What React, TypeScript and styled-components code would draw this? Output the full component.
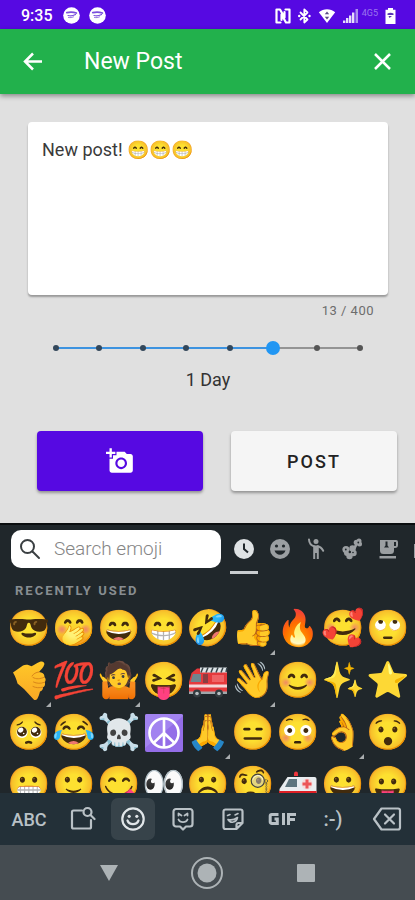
import React, { useState } from 'react';
import styled, { createGlobalStyle, css } from 'styled-components';

const GlobalStyle = createGlobalStyle`
  *, *::before, *::after { box-sizing: border-box; }
  body { margin: 0; background: #e0e0e0; font-family: Roboto, "Noto Sans", sans-serif; }
  button, input, textarea { font-family: inherit; }
  button { border: 0; padding: 0; background: none; cursor: pointer; }
`;

const Screen = styled.div`
  display: flex;
  flex-direction: column;
  height: 100vh;
  overflow: hidden;
  background: #e0e0e0;
`;

const StatusBar = styled.div`
  flex: none;
  display: flex;
  align-items: center;
  justify-content: space-between;
  height: 29px;
  padding: 2px 19px 0 21px;
  background: #5609e2;
  color: #fff;
`;

const StatusGroup = styled.div<{ $gap: number }>`
  display: flex;
  align-items: center;
  gap: ${(p) => p.$gap}px;
`;

const Clock = styled.span`
  margin-right: 1px;
  font-size: 16px;
  font-weight: 500;
  line-height: 20px;
`;

const NetworkType = styled.span`
  font-size: 9px;
  line-height: 10px;
  color: #9a76ee;
  align-self: flex-start;
  margin-left: -4px;
`;

const AppBar = styled.header`
  flex: none;
  display: flex;
  align-items: center;
  height: 65px;
  padding: 0 20px;
  background: #22b14c;
  color: #fff;
  box-shadow: 0 2px 5px rgba(0, 0, 0, 0.4);
`;

const BarButton = styled.button`
  display: flex;
  width: 25px;
  height: 25px;
  color: inherit;
`;

const BarTitle = styled.h1`
  flex: 1;
  margin: 0 0 0 39px;
  font-size: 23px;
  font-weight: 400;
  line-height: 28px;
`;

const Compose = styled.main`
  flex: none;
  padding: 28px 18px 32px 28px;
`;

const Field = styled.div`
  margin-right: 9px;
`;

const PostInput = styled.textarea`
  display: block;
  width: 100%;
  height: 173px;
  padding: 14px;
  border: 0;
  border-radius: 4px;
  outline: none;
  resize: none;
  background: #fff;
  color: #3a3a3a;
  font-size: 18px;
  line-height: 27px;
  box-shadow: 0 2px 2px rgba(0, 0, 0, 0.32);
`;

const Counter = styled.div`
  margin: 7px 14px 0 0;
  text-align: right;
  font-size: 13px;
  line-height: 18px;
  letter-spacing: 0.5px;
  color: #6d6d6d;
`;

const SliderBox = styled.div`
  position: relative;
  height: 16px;
  margin: 20px 21px 0 21px;
`;

const Track = styled.div`
  position: absolute;
  inset: 7px 7px auto;
  height: 2px;
  background: #949494;
`;

const TrackFill = styled.div`
  height: 2px;
  background: #3d93e0;
`;

const Ticks = styled.div`
  position: absolute;
  inset: 5px 4px auto;
  display: flex;
  justify-content: space-between;
`;

const Tick = styled.span<{ $filled: boolean }>`
  width: 6px;
  height: 6px;
  border-radius: 50%;
  background: ${(p) => (p.$filled ? '#33475a' : '#555')};
`;

const Range = styled.input`
  position: absolute;
  inset: 0;
  width: 100%;
  height: 16px;
  margin: 0;
  appearance: none;
  background: transparent;
  &::-webkit-slider-thumb {
    appearance: none;
    width: 14px;
    height: 14px;
    border-radius: 50%;
    background: #2196f3;
  }
`;

const DurationLabel = styled.label`
  display: block;
  margin-top: 12px;
  text-align: center;
  font-size: 18px;
  line-height: 24px;
  color: #333;
`;

const Actions = styled.div`
  display: grid;
  grid-template-columns: 1fr 1fr;
  gap: 28px;
  margin: 39px 0 0 9px;
`;

const ActionButton = styled.button<{ $primary?: boolean }>`
  display: flex;
  align-items: center;
  justify-content: center;
  height: 60px;
  border-radius: 4px;
  background: ${(p) => (p.$primary ? '#5609e2' : '#f5f5f5')};
  color: ${(p) => (p.$primary ? '#fff' : '#222')};
  font-size: 18px;
  font-weight: 500;
  letter-spacing: 2px;
  box-shadow: 0 2px 3px rgba(0, 0, 0, 0.35);
`;

const Keyboard = styled.section`
  flex: 1;
  min-height: 0;
  display: flex;
  flex-direction: column;
  border-top: 2px solid #0b0e10;
  background: #20272b;
`;

const KeyboardTop = styled.div`
  flex: none;
  display: flex;
  align-items: flex-start;
  gap: 5px;
  padding: 5px 0 0 11px;
  overflow: hidden;
`;

const SearchBox = styled.label`
  flex: 0 0 52%;
  min-width: 0;
  display: flex;
  align-items: center;
  gap: 13px;
  height: 38px;
  padding: 0 8px;
  border-radius: 10px;
  background: #fff;
  color: #3a3f42;
`;

const SearchInput = styled.input`
  flex: 1;
  width: 100%;
  min-width: 0;
  border: 0;
  padding: 0;
  outline: none;
  background: none;
  font-size: 19px;
  font-weight: 300;
  line-height: 24px;
  color: #333;
  &::placeholder { color: #858585; opacity: 1; }
`;

const CategoryTabs = styled.div`
  flex: 1;
  min-width: 0;
  display: flex;
  overflow: hidden;
`;

const CategoryTab = styled.button<{ $active?: boolean }>`
  flex: 0 0 36px;
  display: flex;
  justify-content: center;
  height: 44px;
  padding-top: 8px;
  color: ${(p) => (p.$active ? '#dfe3e5' : '#9b9fa2')};
  ${(p) =>
    p.$active &&
    css`
      background: linear-gradient(#c9cdd0, #c9cdd0) center bottom / 28px 3px no-repeat;
    `}
`;

const SectionTitle = styled.h2`
  flex: none;
  margin: 8px 15px 3px;
  font-size: 13px;
  font-weight: 700;
  line-height: 18px;
  letter-spacing: 2px;
  color: #878d91;
`;

const EmojiGrid = styled.div`
  flex: 1;
  min-height: 0;
  overflow: hidden;
  display: grid;
  grid-template-columns: repeat(9, 1fr);
  grid-auto-rows: 52px;
  padding: 0 5px 0 7px;
`;

const EmojiKey = styled.button<{ $variants?: boolean }>`
  position: relative;
  display: flex;
  align-items: center;
  justify-content: center;
  min-width: 0;
  font-size: 35px;
  line-height: 52px;
  color: #fff;
  ${(p) =>
    p.$variants &&
    css`
      &::after {
        content: '';
        position: absolute;
        right: 1px;
        bottom: 0;
        border-style: solid;
        border-width: 0 0 5px 5px;
        border-color: transparent transparent #a9adaf;
      }
    `}
`;

const Glyph = styled.span<{ $mirror?: boolean }>`
  display: block;
  transform: ${(p) => (p.$mirror ? 'scaleX(-1)' : 'none')};
`;

const ModeBar = styled.nav`
  flex: none;
  display: grid;
  grid-template-columns: 58fr repeat(6, 50fr) 57fr;
  align-items: center;
  height: 52px;
  background: #233038;
  color: #b9c1c6;
`;

const ModeKey = styled.button<{ $active?: boolean; $size?: number }>`
  display: flex;
  align-items: center;
  justify-content: center;
  justify-self: center;
  width: 44px;
  height: 42px;
  border-radius: 7px;
  background: ${(p) => (p.$active ? '#37434a' : 'transparent')};
  color: ${(p) => (p.$active ? '#e1e6e9' : 'inherit')};
  font-size: ${(p) => p.$size ?? 18}px;
  font-weight: 500;
`;

const SystemNav = styled.nav`
  flex: none;
  display: grid;
  grid-template-columns: repeat(3, 1fr);
  justify-items: center;
  align-items: center;
  height: 55px;
  padding: 0 60px;
  background: #454c51;
  color: #adb3b6;
`;

const NavButton = styled.button`
  display: flex;
  color: inherit;
`;

const line = { fill: 'none', stroke: 'currentColor', strokeLinecap: 'round', strokeLinejoin: 'round' } as const;

const SpotifyIcon = () => (
  <svg width="17" height="17" viewBox="0 0 17 17">
    <circle cx="8.500" cy="8.500" r="8.300" fill="#fff" />
    <g fill="none" stroke="#7a4fdc" strokeLinecap="round">
      <path d="M3.800 5.600c3.200-.8 6.500-.7 9.600.4" strokeWidth="1.800" />
      <path d="M5 8.500c2.500.8 5 .4 7.500-1" strokeWidth="1.200" />
      <path d="M5.500 10.500c2 .3 3.500.1 5-.6" strokeWidth=".8" />
    </g>
  </svg>
);

const NfcIcon = () => (
  <svg width="16" height="16" viewBox="0 0 16 16">
    <path
      d="M5.500 14.500H1.500v-13H5l4.500 8V4M10.500 1.500h4v13H11L6.500 6.500V12"
      {...line}
      strokeWidth="2.200"
    />
  </svg>
);

const BluetoothIcon = () => (
  <svg width="13" height="16" viewBox="0 0 13 16">
    <path d="M2.500 4.500l7 7L6.300 14.500v-13l3.200 3-7 7" {...line} strokeWidth="1.800" />
    <circle cx="1.200" cy="8" r="1.200" fill="currentColor" />
    <circle cx="11.500" cy="8" r="1.200" fill="currentColor" />
  </svg>
);

const WifiIcon = () => (
  <svg width="18" height="16" viewBox="0 0 18 16">
    <path d="M.8 4.200C5.500.2 12.500.2 17.200 4.200L9 15z" fill="currentColor" />
    <path d="M9 3.500l2.200 2.800H6.800zM9 11.500l2.200-2.800H6.800z" fill="#5a4a86" />
  </svg>
);

const SignalIcon = () => (
  <svg width="16" height="16" viewBox="0 0 16 16" fill="#e6defb">
    <path d="M0 12.500h2.400V15H0zM3 10h2.400v5H3zM6 7.500h2.400V15H6zM9 4.500h2.400V15H9z" />
    <path d="M12.500 1h2.500v14h-2.500z" fill="#ab90ef" />
  </svg>
);

const BatteryIcon = () => (
  <svg width="11" height="16" viewBox="0 0 11 16">
    <path d="M3 0h5v1.700h2.500V16H.5V1.700H3z" fill="currentColor" />
    <path d="M2.500 5.500c2-1 4-1 6 0V7h-6zM3.500 8h3.500L4.500 10z" fill="#5a35b5" />
  </svg>
);

const BackIcon = () => (
  <svg width="25" height="25" viewBox="0 0 25 25">
    <path d="M22 12.500H5M13 4.500l-8 8 8 8" fill="none" stroke="currentColor" strokeWidth="2.500" />
  </svg>
);

const CloseIcon = () => (
  <svg width="25" height="25" viewBox="0 0 25 25">
    <path d="M5 5l15 15M20 5L5 20" fill="none" stroke="currentColor" strokeWidth="2.500" />
  </svg>
);

const AddPhotoIcon = () => (
  <svg width="28" height="28" viewBox="0 0 24 24" fill="currentColor">
    <path d="M3 4V1h2v3h3v2H5v3H3V6H0V4h3zm3 6V7h3V4h7l1.830 2H21c1.100 0 2 .9 2 2v12c0 1.100-.9 2-2 2H5c-1.100 0-2-.9-2-2V10h3zm7 9c2.760 0 5-2.240 5-5s-2.240-5-5-5-5 2.240-5 5 2.240 5 5 5zm-3.200-5c0 1.770 1.430 3.200 3.200 3.200s3.200-1.430 3.200-3.200-1.430-3.200-3.200-3.200-3.200 1.430-3.200 3.200z" />
  </svg>
);

const SearchIcon = () => (
  <svg width="22" height="22" viewBox="0 0 22 22">
    <circle cx="8.500" cy="8.500" r="6.500" {...line} strokeWidth="2" />
    <path d="M13.500 13.500l6.500 6.500" {...line} strokeWidth="2" />
  </svg>
);

const ClockIcon = () => (
  <svg width="22" height="22" viewBox="0 0 22 22">
    <circle cx="11" cy="11" r="10" fill="currentColor" />
    <path d="M11 5.500V11l4 3.500" fill="none" stroke="#20272b" strokeWidth="2" />
  </svg>
);

const SmileyIcon = () => (
  <svg width="22" height="22" viewBox="0 0 22 22">
    <circle cx="11" cy="11" r="10" fill="currentColor" />
    <circle cx="7.500" cy="8" r="1.600" fill="#20272b" />
    <circle cx="14.500" cy="8" r="1.600" fill="#20272b" />
    <path d="M5.500 12.500h11c-.7 2.600-2.900 4.200-5.500 4.200s-4.800-1.600-5.500-4.200z" fill="#20272b" />
  </svg>
);

const PersonIcon = () => (
  <svg width="22" height="22" viewBox="0 0 22 22">
    <circle cx="11" cy="3.500" r="2.500" fill="currentColor" />
    <path d="M8.200 7.500h5.600V21h-2v-6h-1.600v6h-2z" fill="currentColor" />
    <path d="M4 1.500c.2 3.500 1.500 6 5.500 7M12.500 8.300c3 .4 4.500 2.200 5.700 4.500" {...line} strokeWidth="2" />
  </svg>
);

const NatureIcon = () => (
  <svg width="22" height="22" viewBox="0 0 22 22" fill="currentColor">
    <circle cx="5" cy="11.500" r="3.600" />
    <circle cx="11.500" cy="10.500" r="3.200" />
    <circle cx="12.500" cy="15" r="3.200" />
    <circle cx="8.500" cy="18" r="3.200" />
    <circle cx="6" cy="15" r="3" />
    <path d="M11 11l4-6 2 1-3 6z" />
    <circle cx="15.500" cy="4.500" r="2.800" />
    <circle cx="18" cy="3" r="2.500" />
    <circle cx="18.500" cy="6" r="2.500" />
    <g fill="#20272b">
      <circle cx="8.800" cy="14" r="1.200" />
      <circle cx="4.800" cy="11.500" r=".9" />
      <circle cx="12" cy="14.500" r=".8" />
      <circle cx="17.300" cy="4.500" r=".9" />
    </g>
  </svg>
);

const CupIcon = () => (
  <svg width="22" height="22" viewBox="0 0 22 22">
    <path d="M3 2h16a2 2 0 012 2v3a3 3 0 01-3 3h-1v2.500a3.500 3.500 0 01-3.500 3.500h-7A3.500 3.500 0 013 12.500zM17 4v4h2V4z" fill="currentColor" fillRule="evenodd" />
    <path d="M8.500 3.500v4l-1.500 2h5l-1.500-2v-4" fill="#20272b" />
    <path d="M2.500 18h16.500v2.500H2.500z" fill="currentColor" />
  </svg>
);

const BuildingIcon = () => (
  <svg width="22" height="22" viewBox="0 0 22 22">
    <path d="M1 6h12V2h8v18H1z" fill="currentColor" />
    <path d="M4 9h3v2H4zM4 12.500h3v2H4zM4 16h3v2H4zM11 9h3v2h-3z" fill="#20272b" />
  </svg>
);

const AmbulanceIcon = () => (
  <svg width="40" height="40" viewBox="0 0 40 40">
    <path d="M1.500 24l8-12h27a2 2 0 012 2v18h-37z" fill="#e9edf0" />
    <path d="M11 14h8v8H7z" fill="#5d747e" />
    <path d="M16 11V8.500a2 2 0 014 0V11z" fill="#f0353c" />
    <path d="M1 26h37.500v5H1z" fill="#dd1f25" />
    <circle cx="29" cy="19" r="5.500" fill="#f4dada" />
    <path d="M27.500 14.500h3v3h3v3h-3v3h-3v-3h-3v-3h3z" fill="#ec5557" />
    <circle cx="9" cy="33" r="4" fill="#444" />
    <circle cx="30" cy="33" r="4" fill="#444" />
  </svg>
);

const CallMeIcon = () => (
  <svg width="40" height="40" viewBox="0 0 40 40">
    <defs>
      <linearGradient id="hand" x1="0" y1="0" x2="0" y2="1">
        <stop offset="0" stopColor="#ffc828" />
        <stop offset="1" stopColor="#f9a825" />
      </linearGradient>
    </defs>
    <path
      d="M4 11.500L14 4.500c3-1.500 6-.5 8.500.7C25 4 28 2 31 .8c2.500-1 4.800.2 4.300 2.700-.6 3-3.500 5.200-5.300 7.500 3.500.5 6 2.200 5.300 5 1.700 1.500 1.700 3.800.4 5.300.8 2 .2 4-1.700 5 .2 2-1 3.600-3 4.200-.7 2.700-1.500 5.500-2.800 7.500-1 1.500-2.700 1.400-3.700.2L15 28 8.500 22.500c-1-3.500-2-7-4.500-11z"
      fill="url(#hand)"
    />
    <path d="M24 16.500c3.500 2 7 1.500 11-.2M24.500 21c3.500 1.700 7 1.700 11 .3M24 25.500c3 1.500 6.500 1.500 9.700.7M30 11c-3 .2-5.500 1.700-7 4" {...line} stroke="#d9861a" strokeWidth="1" />
  </svg>
);

const FireEngineIcon = () => (
  <svg width="40" height="40" viewBox="0 0 40 40">
    <path d="M3.500 12L9 7.500h30V32H1V21z" fill="#e5393c" />
    <path d="M5 13h8v8H2.500z" fill="#70858e" />
    <path d="M15 13h5v9h-5z" fill="#8b3d42" />
    <path d="M12 6.500h27v5H12z" fill="#dfe5e8" />
    <path d="M15 6.500l-2 5M20 6.500l-2 5M25 6.500l-2 5M30 6.500l-2 5M35 6.500l-2 5M39 7l-1 4" stroke="#39454b" strokeWidth="1.500" />
    <path d="M1 23.500h38v3H1z" fill="#f3d7d9" />
    <path d="M24 14h12v7H24z" fill="#f06265" />
    <path d="M1 30.500h38V33H1z" fill="#9fa7ab" />
    <circle cx="9" cy="32.500" r="4" fill="#333b3f" />
    <circle cx="9" cy="32.500" r="1.800" fill="#b7bec2" />
    <circle cx="31" cy="32.500" r="4" fill="#333b3f" />
    <circle cx="31" cy="32.500" r="1.800" fill="#b7bec2" />
  </svg>
);

const PeaceIcon = () => (
  <svg width="40" height="40" viewBox="0 0 40 40">
    <rect x="1" y="1" width="38" height="38" rx="2" fill="#946ee8" />
    <path d="M1 3a2 2 0 012-2h34a2 2 0 012 2L1 35z" fill="#a283f0" />
    <circle cx="20" cy="20" r="14.500" fill="none" stroke="#fff" strokeWidth="2.600" />
    <path d="M20 5.500v29M20 20L9.500 30M20 20l10.500 10" fill="none" stroke="#fff" strokeWidth="2.600" />
  </svg>
);

const SearchPanelIcon = () => (
  <svg width="26" height="26" viewBox="0 0 26 26">
    <path d="M12 4.500H3.500a1.500 1.500 0 00-1.500 1.500v15A1.500 1.500 0 003.500 22.500h16A1.500 1.500 0 0021 21v-7" {...line} strokeWidth="2.200" />
    <circle cx="17.500" cy="6" r="4" {...line} strokeWidth="2.200" />
    <path d="M20.500 9l4 4" {...line} strokeWidth="2.200" />
  </svg>
);

const FaceIcon = () => (
  <svg width="26" height="26" viewBox="0 0 26 26">
    <circle cx="13" cy="13" r="10.700" {...line} strokeWidth="2.200" />
    <circle cx="9.200" cy="10.300" r="1.600" fill="currentColor" />
    <circle cx="16.800" cy="10.300" r="1.600" fill="currentColor" />
    <path d="M7.500 14.500c1.800 4.800 9.200 4.800 11 0" {...line} strokeWidth="2.200" />
  </svg>
);

const AvatarIcon = () => (
  <svg width="24" height="26" viewBox="0 0 24 26">
    <path d="M5 3h14a2.500 2.500 0 012.500 2.500V18a2.500 2.500 0 01-2.500 2.500h-4L12 23.500l-3-3H5A2.500 2.500 0 012.500 18V5.500A2.500 2.500 0 015 3z" {...line} strokeWidth="2.200" />
    <path d="M7.500 9.500V7.500l3 2M13.500 9.500l3-2v2M7.500 13.500c1.500 3.500 7.500 3.500 9 0" {...line} strokeWidth="1.800" />
  </svg>
);

const StickerIcon = () => (
  <svg width="24" height="26" viewBox="0 0 24 26">
    <path d="M4.500 3.500h15A2 2 0 0121.500 5.500V17L15.500 23h-11a2 2 0 01-2-2V5.500a2 2 0 012-2zM15.500 22.500V19a2 2 0 012-2h3.500" {...line} strokeWidth="2.200" />
    <path d="M6.500 9.500L9 8.500M14 9l3-1.500M7 13.500c3.500 1 7-.2 9.500-2-1 5-7 6.500-9.500 2z" {...line} strokeWidth="1.600" />
  </svg>
);

const GifIcon = () => (
  <svg width="30" height="16" viewBox="0 0 30 16" role="img" aria-label="GIF">
    <path d="M10.500 3.500H3.800a1.600 1.600 0 00-1.600 1.600v5.800a1.600 1.600 0 001.600 1.600h5.500V8H6.500M15.500 2v12M20.500 14V3.500H28M20.500 8.500H27" fill="none" stroke="currentColor" strokeWidth="3" />
  </svg>
);

const BackspaceIcon = () => (
  <svg width="30" height="26" viewBox="0 0 30 26">
    <path d="M9.500 2.500H26A2 2 0 0128 4.500v17a2 2 0 01-2 2H9.500L2 13z" {...line} strokeWidth="2.200" />
    <path d="M13 8.500l9 9M22 8.500l-9 9" {...line} strokeWidth="2.200" />
  </svg>
);

type Emoji = { char: string; name: string; variants?: boolean; mirror?: boolean; Icon?: () => React.JSX.Element };

const emojis: Emoji[] = [
  { char: '😎', name: 'Sunglasses' },
  { char: '🤭', name: 'Hand over mouth' },
  { char: '😄', name: 'Grinning with smiling eyes' },
  { char: '😁', name: 'Beaming' },
  { char: '🤣', name: 'Rolling on the floor laughing' },
  { char: '👍', name: 'Thumbs up', variants: true },
  { char: '🔥', name: 'Fire' },
  { char: '🥰', name: 'Smiling with hearts' },
  { char: '🙄', name: 'Rolling eyes' },
  { char: '🤙', name: 'Call me', variants: true, Icon: CallMeIcon },
  { char: '💯', name: 'Hundred points' },
  { char: '🤷', name: 'Shrug', variants: true },
  { char: '😝', name: 'Squinting with tongue' },
  { char: '🚒', name: 'Fire engine', Icon: FireEngineIcon },
  { char: '👋', name: 'Waving hand', variants: true },
  { char: '😊', name: 'Smiling' },
  { char: '✨', name: 'Sparkles', mirror: true },
  { char: '⭐', name: 'Star' },
  { char: '🥺', name: 'Pleading' },
  { char: '😂', name: 'Tears of joy' },
  { char: '☠️', name: 'Skull and crossbones' },
  { char: '☮️', name: 'Peace', Icon: PeaceIcon },
  { char: '🙏', name: 'Folded hands', variants: true },
  { char: '😑', name: 'Expressionless' },
  { char: '😳', name: 'Flushed' },
  { char: '👌', name: 'OK hand', variants: true },
  { char: '😯', name: 'Hushed' },
  { char: '😬', name: 'Grimacing' },
  { char: '🙂', name: 'Slightly smiling' },
  { char: '😋', name: 'Savoring food' },
  { char: '👀', name: 'Eyes' },
  { char: '☹️', name: 'Frowning' },
  { char: '🧐', name: 'Monocle' },
  { char: '🚑', name: 'Ambulance', Icon: AmbulanceIcon },
  { char: '😀', name: 'Grinning' },
  { char: '😛', name: 'Tongue out' },
];

const durations = ['1 Hour', '2 Hours', '4 Hours', '8 Hours', '12 Hours', '1 Day', '3 Days', '1 Week'];

export default function App() {
  const [text, setText] = useState('New post! 😁😁😁');
  const [step, setStep] = useState(5);
  const last = durations.length - 1;

  return (
    <>
      <GlobalStyle />
      <Screen>
        <StatusBar>
          <StatusGroup $gap={9}>
            <Clock>9:35</Clock>
            <SpotifyIcon />
            <SpotifyIcon />
          </StatusGroup>
          <StatusGroup $gap={7}>
            <NfcIcon />
            <BluetoothIcon />
            <WifiIcon />
            <SignalIcon />
            <NetworkType>4G5</NetworkType>
            <BatteryIcon />
          </StatusGroup>
        </StatusBar>

        <AppBar>
          <BarButton aria-label="Back"><BackIcon /></BarButton>
          <BarTitle>New Post</BarTitle>
          <BarButton aria-label="Close"><CloseIcon /></BarButton>
        </AppBar>

        <Compose>
          <Field>
            <PostInput aria-label="Post text" spellCheck={false} maxLength={400} value={text} onChange={(e) => setText(e.target.value)} />
            <Counter>{Array.from(text).length} / 400</Counter>
            <SliderBox>
              <Track>
                <TrackFill style={{ width: `${(step / last) * 100}%` }} />
              </Track>
              <Ticks>
                {durations.map((d, i) => (
                  <Tick key={d} $filled={i < step} />
                ))}
              </Ticks>
              <Range id="duration" type="range" min={0} max={last} value={step} onChange={(e) => setStep(Number(e.target.value))} />
            </SliderBox>
            <DurationLabel htmlFor="duration">{durations[step]}</DurationLabel>
          </Field>
          <Actions>
            <ActionButton $primary aria-label="Add photo"><AddPhotoIcon /></ActionButton>
            <ActionButton>POST</ActionButton>
          </Actions>
        </Compose>

        <Keyboard aria-label="Emoji keyboard">
          <KeyboardTop>
            <SearchBox>
              <SearchIcon />
              <SearchInput placeholder="Search emoji" aria-label="Search emoji" />
            </SearchBox>
            <CategoryTabs>
              <CategoryTab $active aria-label="Recent"><ClockIcon /></CategoryTab>
              <CategoryTab aria-label="Smileys"><SmileyIcon /></CategoryTab>
              <CategoryTab aria-label="People"><PersonIcon /></CategoryTab>
              <CategoryTab aria-label="Nature"><NatureIcon /></CategoryTab>
              <CategoryTab aria-label="Food"><CupIcon /></CategoryTab>
              <CategoryTab aria-label="Places"><BuildingIcon /></CategoryTab>
            </CategoryTabs>
          </KeyboardTop>
          <SectionTitle>RECENTLY USED</SectionTitle>
          <EmojiGrid>
            {emojis.map(({ char, name, variants, mirror, Icon }) => (
              <EmojiKey key={name} aria-label={name} $variants={variants} onClick={() => setText(text + char)}>
                {Icon ? <Icon /> : <Glyph $mirror={mirror}>{char}</Glyph>}
              </EmojiKey>
            ))}
          </EmojiGrid>
          <ModeBar aria-label="Keyboard modes">
            <ModeKey>ABC</ModeKey>
            <ModeKey aria-label="Search"><SearchPanelIcon /></ModeKey>
            <ModeKey $active aria-label="Emoji"><FaceIcon /></ModeKey>
            <ModeKey aria-label="Avatar"><AvatarIcon /></ModeKey>
            <ModeKey aria-label="Stickers"><StickerIcon /></ModeKey>
            <ModeKey aria-label="GIF"><GifIcon /></ModeKey>
            <ModeKey $size={20}>:-)</ModeKey>
            <ModeKey aria-label="Delete"><BackspaceIcon /></ModeKey>
          </ModeBar>
        </Keyboard>

        <SystemNav aria-label="System">
          <NavButton aria-label="Back">
            <svg width="20" height="18" viewBox="0 0 20 18"><path d="M1 1h18l-9 16z" fill="currentColor" /></svg>
          </NavButton>
          <NavButton aria-label="Home">
            <svg width="34" height="34" viewBox="0 0 34 34">
              <circle cx="17" cy="17" r="15" fill="none" stroke="currentColor" strokeWidth="2" />
              <circle cx="17" cy="17" r="9.500" fill="currentColor" />
            </svg>
          </NavButton>
          <NavButton aria-label="Overview">
            <svg width="18" height="18" viewBox="0 0 18 18"><rect width="18" height="18" rx="1" fill="currentColor" /></svg>
          </NavButton>
        </SystemNav>
      </Screen>
    </>
  );
}
